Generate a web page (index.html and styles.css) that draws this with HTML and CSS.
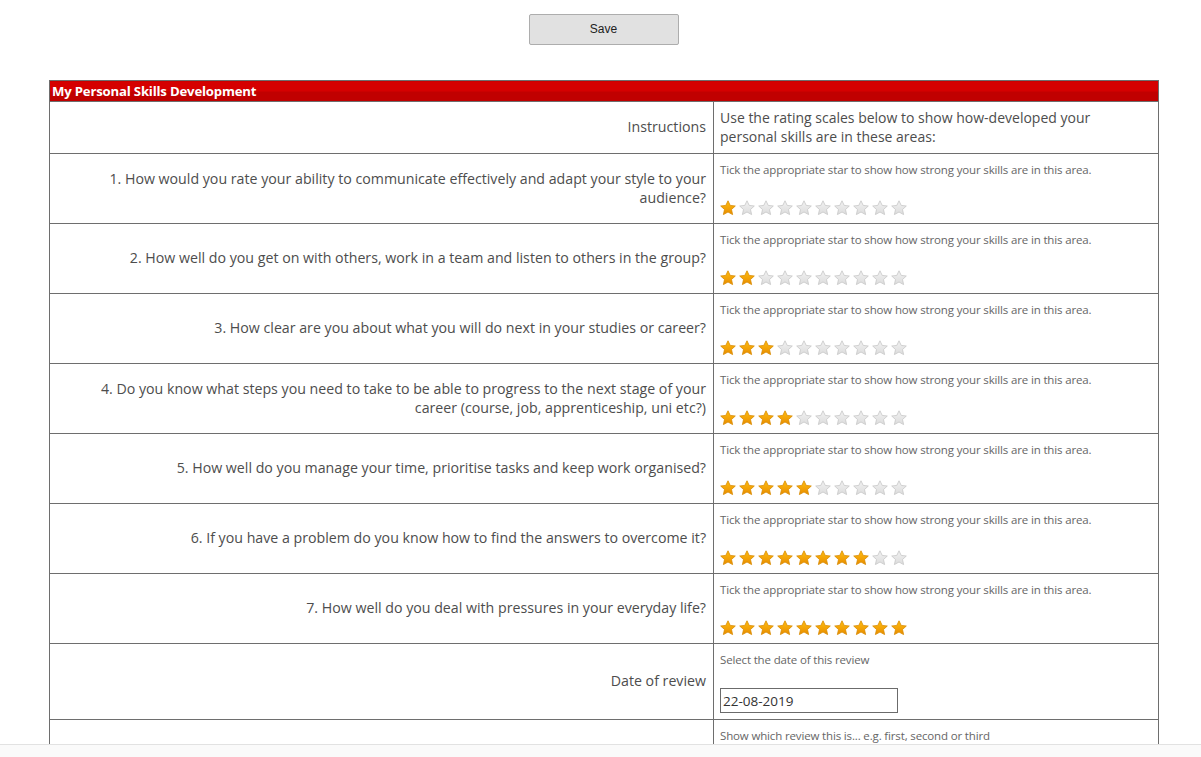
FILE: index.html
```html
<!DOCTYPE html>
<html>
<head>
<meta charset="utf-8">
<link rel="stylesheet" href="styles.css">
</head>
<body>
<svg class="defs" width="0" height="0">
  <defs>
    <linearGradient id="gold" x1="0" y1="0" x2="0" y2="1">
      <stop offset="0" stop-color="#ffbe10"/>
      <stop offset="1" stop-color="#e88c00"/>
    </linearGradient>
    <linearGradient id="grey" x1="0" y1="0" x2="0" y2="1">
      <stop offset="0" stop-color="#f2f2f2"/>
      <stop offset="1" stop-color="#dcdcdc"/>
    </linearGradient>
    <path id="star" d="M8 0.8 L10.2 5.4 L15.3 6 L11.5 9.5 L12.6 14.6 L8 12 L3.4 14.6 L4.5 9.5 L0.7 6 L5.8 5.4 Z"/>
  </defs>
</svg>
<div class="page">
  <div class="toolbar"><button class="save">Save</button></div>
  <table class="form">
    <colgroup><col class="col-label"><col class="col-value"></colgroup>
    <tr><td class="head" colspan="2">My Personal Skills Development</td></tr>
    <tr class="intro">
      <td class="label">Instructions</td>
      <td class="value big">Use the rating scales below to show how-developed your personal skills are in these areas:</td>
    </tr>
    <tr class="q">
      <td class="label">1. How would you rate your ability to communicate effectively and adapt your style to your audience?</td>
      <td class="value"><div class="hint">Tick the appropriate star to show how strong your skills are in this area.</div>
        <div class="stars"><svg class="on"><use href="#star"/></svg><svg><use href="#star"/></svg><svg><use href="#star"/></svg><svg><use href="#star"/></svg><svg><use href="#star"/></svg><svg><use href="#star"/></svg><svg><use href="#star"/></svg><svg><use href="#star"/></svg><svg><use href="#star"/></svg><svg><use href="#star"/></svg></div></td>
    </tr>
    <tr class="q">
      <td class="label">2. How well do you get on with others, work in a team and listen to others in the group?</td>
      <td class="value"><div class="hint">Tick the appropriate star to show how strong your skills are in this area.</div>
        <div class="stars"><svg class="on"><use href="#star"/></svg><svg class="on"><use href="#star"/></svg><svg><use href="#star"/></svg><svg><use href="#star"/></svg><svg><use href="#star"/></svg><svg><use href="#star"/></svg><svg><use href="#star"/></svg><svg><use href="#star"/></svg><svg><use href="#star"/></svg><svg><use href="#star"/></svg></div></td>
    </tr>
    <tr class="q">
      <td class="label">3. How clear are you about what you will do next in your studies or career?</td>
      <td class="value"><div class="hint">Tick the appropriate star to show how strong your skills are in this area.</div>
        <div class="stars"><svg class="on"><use href="#star"/></svg><svg class="on"><use href="#star"/></svg><svg class="on"><use href="#star"/></svg><svg><use href="#star"/></svg><svg><use href="#star"/></svg><svg><use href="#star"/></svg><svg><use href="#star"/></svg><svg><use href="#star"/></svg><svg><use href="#star"/></svg><svg><use href="#star"/></svg></div></td>
    </tr>
    <tr class="q">
      <td class="label">4. Do you know what steps you need to take to be able to progress to the next stage of your career (course, job, apprenticeship, uni etc?)</td>
      <td class="value"><div class="hint">Tick the appropriate star to show how strong your skills are in this area.</div>
        <div class="stars"><svg class="on"><use href="#star"/></svg><svg class="on"><use href="#star"/></svg><svg class="on"><use href="#star"/></svg><svg class="on"><use href="#star"/></svg><svg><use href="#star"/></svg><svg><use href="#star"/></svg><svg><use href="#star"/></svg><svg><use href="#star"/></svg><svg><use href="#star"/></svg><svg><use href="#star"/></svg></div></td>
    </tr>
    <tr class="q">
      <td class="label">5. How well do you manage your time, prioritise tasks and keep work organised?</td>
      <td class="value"><div class="hint">Tick the appropriate star to show how strong your skills are in this area.</div>
        <div class="stars"><svg class="on"><use href="#star"/></svg><svg class="on"><use href="#star"/></svg><svg class="on"><use href="#star"/></svg><svg class="on"><use href="#star"/></svg><svg class="on"><use href="#star"/></svg><svg><use href="#star"/></svg><svg><use href="#star"/></svg><svg><use href="#star"/></svg><svg><use href="#star"/></svg><svg><use href="#star"/></svg></div></td>
    </tr>
    <tr class="q">
      <td class="label">6. If you have a problem do you know how to find the answers to overcome it?</td>
      <td class="value"><div class="hint">Tick the appropriate star to show how strong your skills are in this area.</div>
        <div class="stars"><svg class="on"><use href="#star"/></svg><svg class="on"><use href="#star"/></svg><svg class="on"><use href="#star"/></svg><svg class="on"><use href="#star"/></svg><svg class="on"><use href="#star"/></svg><svg class="on"><use href="#star"/></svg><svg class="on"><use href="#star"/></svg><svg class="on"><use href="#star"/></svg><svg><use href="#star"/></svg><svg><use href="#star"/></svg></div></td>
    </tr>
    <tr class="q">
      <td class="label">7. How well do you deal with pressures in your everyday life?</td>
      <td class="value"><div class="hint">Tick the appropriate star to show how strong your skills are in this area.</div>
        <div class="stars"><svg class="on"><use href="#star"/></svg><svg class="on"><use href="#star"/></svg><svg class="on"><use href="#star"/></svg><svg class="on"><use href="#star"/></svg><svg class="on"><use href="#star"/></svg><svg class="on"><use href="#star"/></svg><svg class="on"><use href="#star"/></svg><svg class="on"><use href="#star"/></svg><svg class="on"><use href="#star"/></svg><svg class="on"><use href="#star"/></svg></div></td>
    </tr>
    <tr class="date">
      <td class="label">Date of review</td>
      <td class="value"><div class="hint">Select the date of this review</div>
        <input class="datebox" type="text" value="22-08-2019"></td>
    </tr>
    <tr class="q">
      <td class="label"></td>
      <td class="value"><div class="hint">Show which review this is... e.g. first, second or third</div></td>
    </tr>
  </table>
</div>
<div class="footer"></div>
</body>
</html>
```

FILE: styles.css
```css
html { overflow: hidden; }
body {
  margin: 8px;
  background: #fff;
  font-family: "Open Sans", "Liberation Sans", sans-serif;
  color: #4a4a4a;
}
.defs { position: absolute; width: 0; height: 0; }
.page { width: 1109px; margin-left: 41px; }
.toolbar {
  display: flex;
  justify-content: center;
  padding-top: 6px;
  margin-bottom: 35px;
}
.save {
  width: 150px;
  height: 31px;
  background: #e1e1e1;
  border: 1px solid #adadad;
  border-radius: 2px;
  font-family: "Liberation Sans", Arial, sans-serif;
  font-size: 12px;
  color: #222;
  padding: 0 0 2px 0;
}
.form {
  width: 1109px;
  border-collapse: collapse;
  table-layout: fixed;
}
.col-label { width: 664px; }
.col-value { width: 445px; }
.form td {
  border: 1px solid #6e6e6e;
  padding: 0;
}
.form td.head {
  height: 20px;
  background: linear-gradient(#d50000 0, #d50000 50%, #c00000 50%, #c00000 100%);
  color: #fff;
  font-weight: 700;
  font-size: 13.2px;
  letter-spacing: -0.2px;
  padding: 0 2px;
  line-height: 20px;
}
.form td.label {
  text-align: right;
  vertical-align: middle;
  font-size: 14.2px;
  line-height: 19px;
  padding: 0 7px 2px 40px;
  color: #4d4d4d;
}
.form td.value {
  vertical-align: top;
  padding: 6px 6px 0 6px;
}
.form td.big {
  font-size: 14px;
  line-height: 19px;
  color: #4d4d4d;
  padding-top: 6px;
  padding-right: 40px;
}
.intro td { height: 45px; }
.q td { height: 63px; }
.date td { height: 69px; }
.hint {
  font-size: 11.5px;
  line-height: 20px;
  color: #666;
  letter-spacing: -0.15px;
}
.stars {
  display: flex;
  gap: 3px;
  margin-top: 20px;
}
.stars svg {
  width: 16px;
  height: 16px;
  fill: url(#grey);
  stroke: #c6c6c6;
  stroke-width: 0.8;
}
.stars svg.on {
  fill: url(#gold);
  stroke: #d88a00;
}
.datebox {
  margin-top: 18px;
  width: 178px;
  height: 25px;
  box-sizing: border-box;
  border: 1px solid #6b6b6b;
  padding: 0 2px;
  font-family: "Open Sans", "Liberation Sans", sans-serif;
  font-size: 13.5px;
  color: #333;
}
.footer {
  position: fixed;
  left: 0;
  right: 0;
  bottom: 0;
  height: 12px;
  background: #fafafa;
  border-top: 1px solid #e2e2e2;
}
```
